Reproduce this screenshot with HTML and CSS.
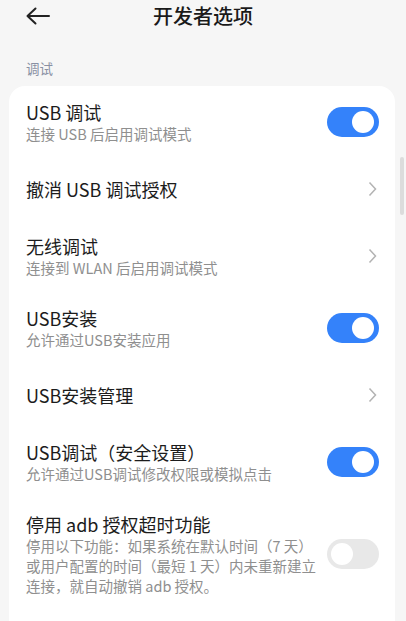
FILE: index.html
```html
<!DOCTYPE html>
<html lang="zh-CN">
<head>
  <meta charset="UTF-8" />
  <meta name="viewport" content="width=device-width, initial-scale=1.0" />
  <title>开发者选项</title>
  <link rel="stylesheet" href="styles.css">
</head>
<body>
  <header class="topbar">
    <div class="back">
      <svg width="24" height="18" viewBox="0 0 24 18">
        <path d="M1.5 9 H23 M9.5 1.5 L1.5 9 L9.5 16.5" fill="none" stroke="#222" stroke-width="2" stroke-linecap="round" stroke-linejoin="round" />
      </svg>
    </div>
    <h1>开发者选项</h1>
    <div></div>
  </header>

  <div class="section-label">调试</div>

  <div class="card">
    <div class="row">
      <div class="text">
        <div class="title">USB 调试</div>
        <div class="sub">连接 USB 后启用调试模式</div>
      </div>
      <span class="switch on"></span>
    </div>

    <div class="row">
      <div class="text">
        <div class="title">撤消 USB 调试授权</div>
      </div>
      <svg class="chev" width="10" height="16" viewBox="0 0 10 16"><path d="M1.5 1.5 L7.5 8 L1.5 14.5" fill="none" stroke="#b3b3b3" stroke-width="1.5" /></svg>
    </div>

    <div class="row">
      <div class="text">
        <div class="title">无线调试</div>
        <div class="sub">连接到 WLAN 后启用调试模式</div>
      </div>
      <svg class="chev" width="10" height="16" viewBox="0 0 10 16"><path d="M1.5 1.5 L7.5 8 L1.5 14.5" fill="none" stroke="#b3b3b3" stroke-width="1.5" /></svg>
    </div>

    <div class="row">
      <div class="text">
        <div class="title">USB安装</div>
        <div class="sub">允许通过USB安装应用</div>
      </div>
      <span class="switch on"></span>
    </div>

    <div class="row">
      <div class="text">
        <div class="title">USB安装管理</div>
      </div>
      <svg class="chev" width="10" height="16" viewBox="0 0 10 16"><path d="M1.5 1.5 L7.5 8 L1.5 14.5" fill="none" stroke="#b3b3b3" stroke-width="1.5" /></svg>
    </div>

    <div class="row">
      <div class="text">
        <div class="title">USB调试（安全设置）</div>
        <div class="sub">允许通过USB调试修改权限或模拟点击</div>
      </div>
      <span class="switch on"></span>
    </div>

    <div class="row">
      <div class="text">
        <div class="title">停用 adb 授权超时功能</div>
        <div class="sub">停用以下功能：如果系统在默认时间（7 天）<br>或用户配置的时间（最短 1 天）内未重新建立<br>连接，就自动撤销 adb 授权。</div>
      </div>
      <span class="switch"></span>
    </div>
  </div>

  <div class="scrollbar"></div>
</body>
</html>
```

FILE: styles.css
```css
html, body {
  height: 100%;
  overflow: hidden;
}
body {
  margin: 0;
  background: #f6f6f6;
  font-family: "Noto Sans CJK SC", "Noto Sans", sans-serif;
  color: #1c1c1c;
}
.topbar {
  display: grid;
  grid-template-columns: 1fr auto 1fr;
  align-items: center;
  height: 32px;
}
.back {
  padding-left: 26px;
  display: flex;
  align-items: center;
}
.topbar h1 {
  margin: 0;
  font-size: 20px;
  font-weight: 500;
  line-height: 32px;
  color: #1a1a1a;
}
.section-label {
  margin: 26px 0 0 26px;
  font-size: 13.5px;
  line-height: 20px;
  color: #8990a3;
}
.card {
  background: #fff;
  margin: 8px 11px 0 9px;
  border-radius: 16px;
  padding-bottom: 40px;
}
.row {
  display: flex;
  align-items: center;
  min-height: 62px;
  box-sizing: border-box;
  padding: 14px 16px 14px 17px;
}
.text {
  flex: 1;
  min-width: 0;
}
.title {
  font-size: 18px;
  line-height: 24px;
}
.sub {
  font-size: 14.5px;
  line-height: 20px;
  color: #8f8f8f;
}
.chev {
  flex-shrink: 0;
  margin-right: 1px;
}
.switch {
  flex-shrink: 0;
  position: relative;
  width: 52px;
  height: 30px;
  border-radius: 15px;
  background: #e8e8e8;
}
.switch::after {
  content: "";
  position: absolute;
  top: 4px;
  left: 4px;
  width: 22px;
  height: 22px;
  border-radius: 50%;
  background: #fff;
}
.switch.on {
  background: #3482fa;
}
.switch.on::after {
  left: auto;
  right: 5px;
}
.scrollbar {
  position: absolute;
  top: 157px;
  left: 400px;
  width: 4px;
  height: 58px;
  border-radius: 2px;
  background: #dcdcdc;
}
```
